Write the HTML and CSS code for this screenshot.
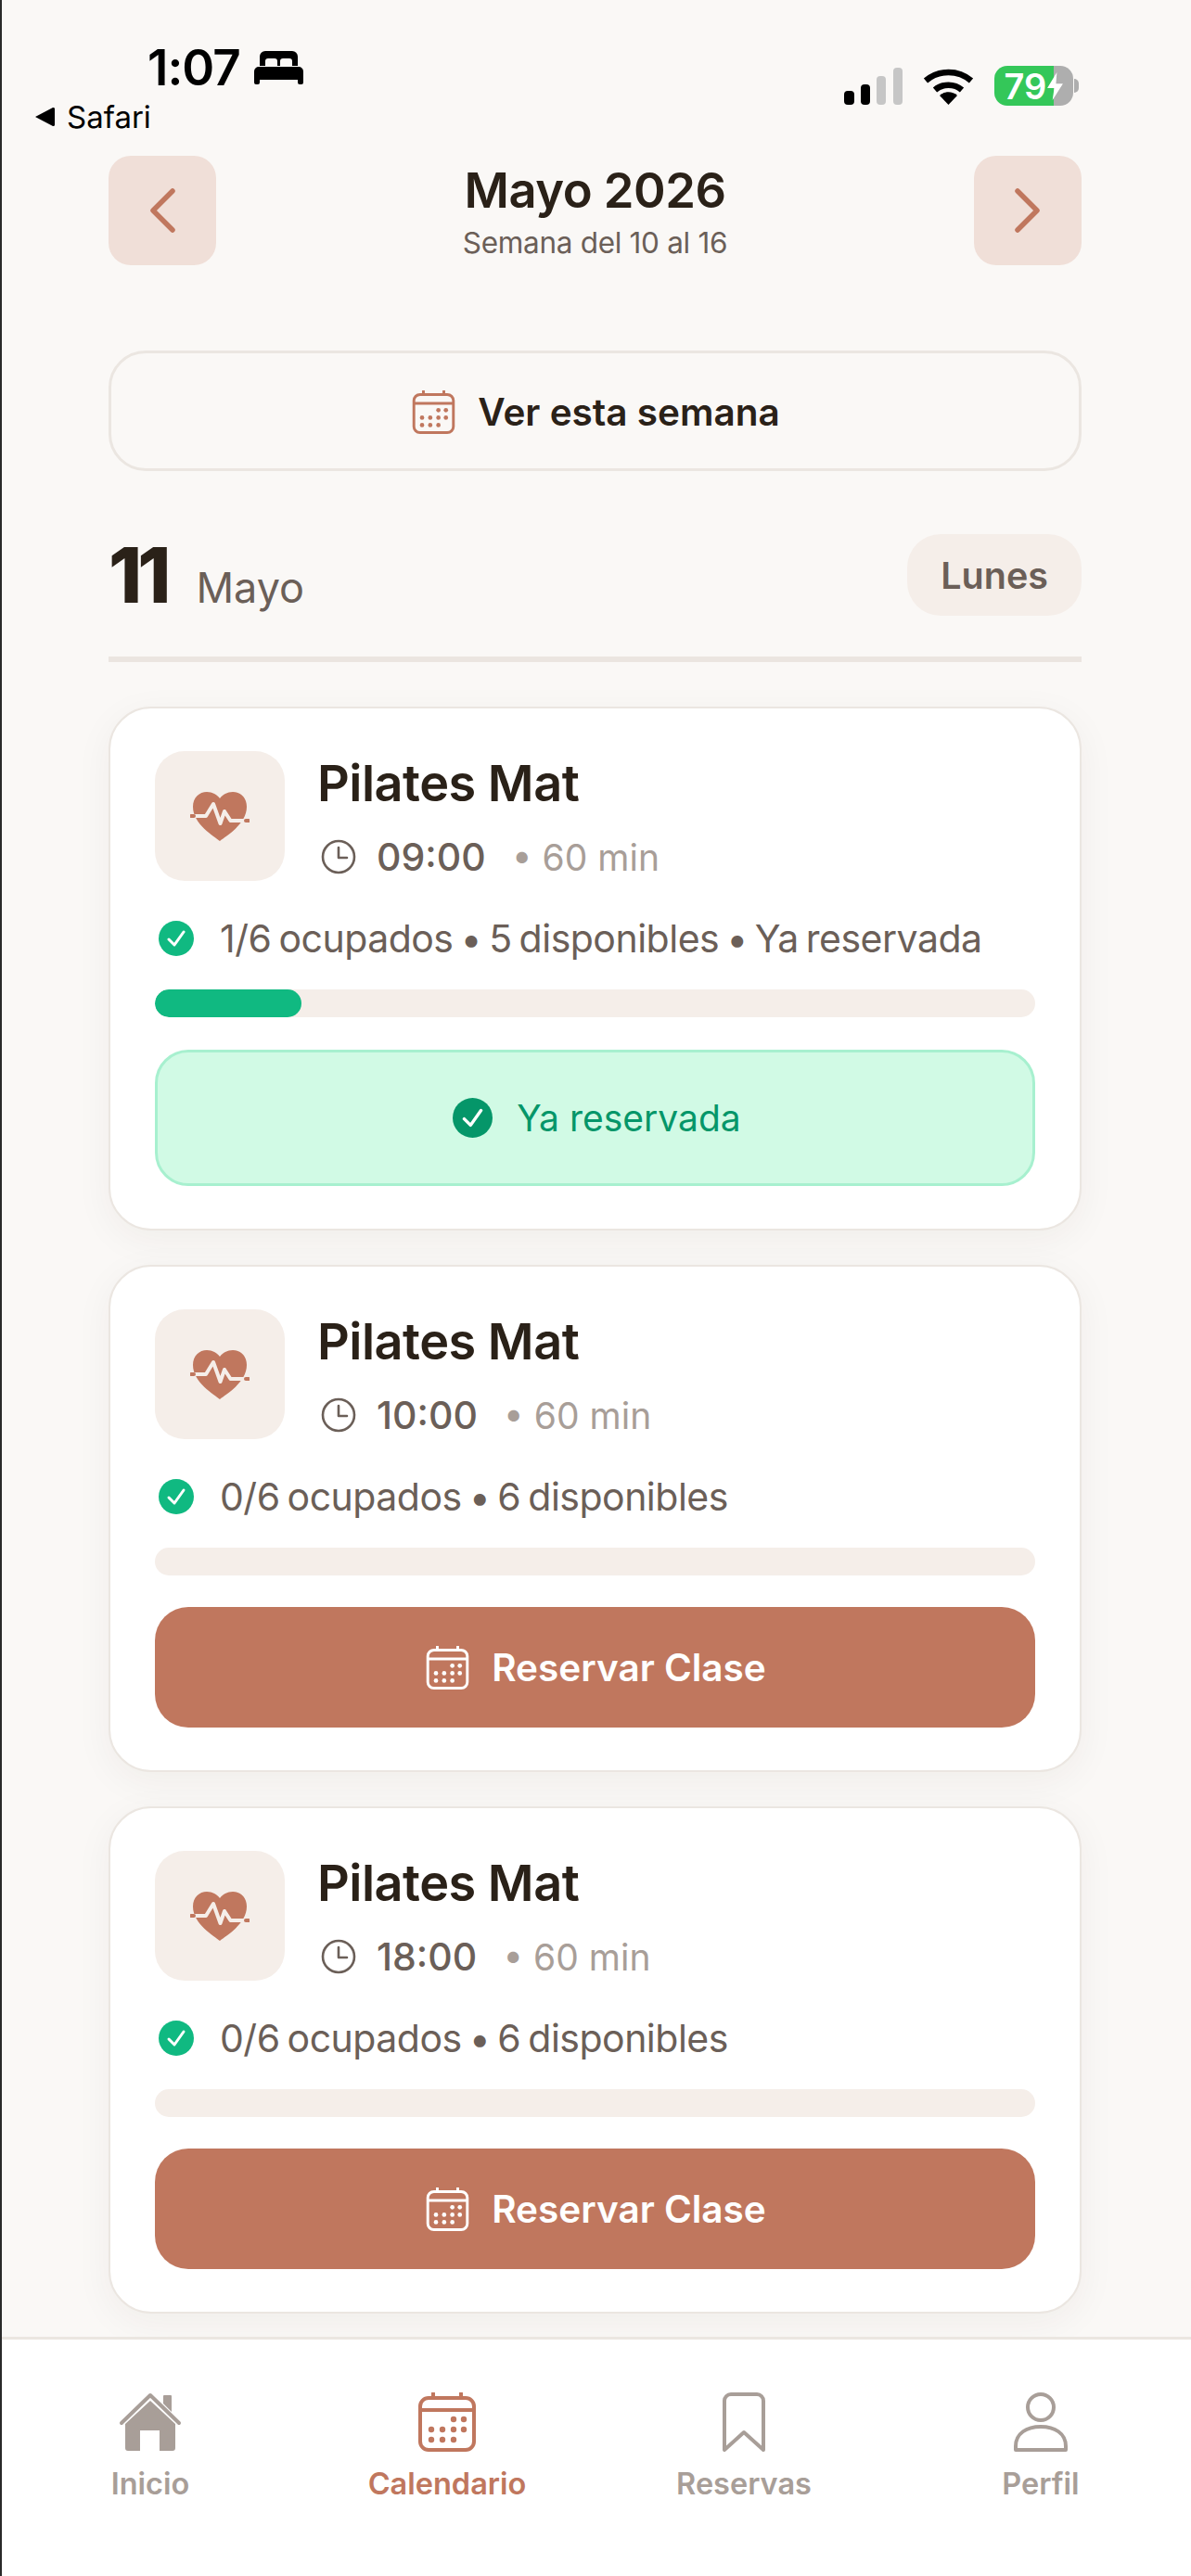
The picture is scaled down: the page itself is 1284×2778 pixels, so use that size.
FILE: index.html
```html
<!DOCTYPE html>
<html lang="es">

<head>
    <meta charset="utf-8">
    <title>Calendario</title>
    <link rel="stylesheet" href="styles.css">
</head>

<body>
    <svg class="defs" width="0" height="0">
        <symbol id="cal" viewBox="0 0 64 64">
            <rect x="3" y="6" width="58" height="56" rx="9" fill="none" stroke="currentColor" stroke-width="4" />
            <path d="M3 19H61" fill="none" stroke="currentColor" stroke-width="4" />
            <path d="M17 1V6M47 1V6" fill="none" stroke="currentColor" stroke-width="4" stroke-linecap="round" />
            <g fill="currentColor">
                <circle cx="39" cy="29" r="3.2" />
                <circle cx="50" cy="29" r="3.2" />
                <circle cx="15" cy="40" r="3.2" />
                <circle cx="27" cy="40" r="3.2" />
                <circle cx="39" cy="40" r="3.2" />
                <circle cx="50" cy="40" r="3.2" />
                <circle cx="15" cy="51" r="3.2" />
                <circle cx="27" cy="51" r="3.2" />
                <circle cx="39" cy="51" r="3.2" />
            </g>
        </symbol>
        <symbol id="heart" viewBox="0 0 64 64">
            <path d="M32 59C26 54 3 41 3 22C3 12 10 6 18 6C24 6 29 9 32 13C35 9 40 6 46 6C54 6 61 12 61 22C61 41 38 54 32 59Z" fill="#c0775e" />
            <path d="M4 32H17L25 19L32.500 40L37 27L43.500 37H60" fill="none" stroke="#f5eee9" stroke-width="4" stroke-linejoin="round" />
            <path d="M1 32H4M60 37H63" fill="none" stroke="#c0775e" stroke-width="4" stroke-linecap="round" />
        </symbol>
        <symbol id="clock" viewBox="0 0 38 38">
            <circle cx="19" cy="19" r="17" fill="none" stroke="currentColor" stroke-width="2.600" />
            <path d="M19 9V20H28" fill="none" stroke="currentColor" stroke-width="2.600" stroke-linecap="round" stroke-linejoin="round" />
        </symbol>
        <symbol id="check" viewBox="0 0 38 38">
            <circle cx="19" cy="19" r="19" fill="currentColor" />
            <path d="M11 20L17 26L27 12" fill="none" stroke="#fff" stroke-width="3" stroke-linecap="round" stroke-linejoin="round" />
        </symbol>
    </svg>

    <div class="page">
        <div class="status">
            <div class="status-left">
                <div class="clock-row">
                    <span class="time">1:07</span>
                    <svg class="bed" viewBox="0 0 53 36">
                        <path d="M6 16V6a6 6 0 0 1 6-6H41a6 6 0 0 1 6 6V16H41V11a3 3 0 0 0-3-3H31a3 3 0 0 0-3 3V16H25V11a3 3 0 0 0-3-3H15a3 3 0 0 0-3 3V16Z" />
                        <path d="M5 17H48a5 5 0 0 1 5 5V34a2 2 0 0 1-2 2H49a2 2 0 0 1-2-2V31H6V34a2 2 0 0 1-2 2H2a2 2 0 0 1-2-2V22a5 5 0 0 1 5-5Z" />
                    </svg>
                </div>
                <div class="back-row">
                    <svg class="back-arrow" viewBox="0 0 21 20">
                        <path d="M0 10L19 0a1.500 1.500 0 0 1 2 1.500V18.500a1.500 1.500 0 0 1-2 1.500Z" />
                    </svg>
                    <span>Safari</span>
                </div>
            </div>
            <div class="status-right">
                <svg class="signal" viewBox="0 0 63 40">
                    <rect x="0" y="25" width="11" height="15" rx="4" />
                    <rect x="18" y="18" width="10" height="22" rx="4" />
                    <rect class="off" x="35" y="9" width="10" height="31" rx="4" />
                    <rect class="off" x="53" y="0" width="10" height="40" rx="4" />
                </svg>
                <svg class="wifi" viewBox="0 0 55 40">
                    <path d="M3 14C17 2 38 2 52 14" fill="none" stroke="#000" stroke-width="6.500" />
                    <path d="M13 24C21 17 34 17 42 24" fill="none" stroke="#000" stroke-width="6.500" />
                    <path d="M18 30C23 25 32 25 37 30L27.500 40Z" />
                </svg>
                <div class="battery"><span>79</span><svg class="bolt" viewBox="0 0 18 32">
                        <path d="M11 0L0 18H8L6 32L18 13H10Z" />
                    </svg></div>
            </div>
        </div>

        <main class="content">
            <div class="month-row">
                <button class="nav-btn"><svg class="chev" viewBox="0 0 30 48">
                        <path d="M26 3L5 24L26 45" />
                    </svg></button>
                <div class="month-title">
                    <h1>Mayo 2026</h1>
                    <p>Semana del 10 al 16</p>
                </div>
                <button class="nav-btn"><svg class="chev" viewBox="0 0 30 48">
                        <path d="M4 3L25 24L4 45" />
                    </svg></button>
            </div>

            <button class="week-btn"><svg class="ico-cal accent">
                    <use href="#cal" />
                </svg>Ver esta semana</button>

            <div class="day-row">
                <div class="day-date"><span class="day-num">11</span><span class="day-month">Mayo</span></div>
                <span class="day-pill">Lunes</span>
            </div>

            <article class="card">
                <div class="card-top">
                    <div class="card-icon"><svg class="ico-heart">
                            <use href="#heart" />
                        </svg></div>
                    <div class="card-info">
                        <h2>Pilates Mat</h2>
                        <div class="card-time"><svg class="ico-clock">
                                <use href="#clock" />
                            </svg><strong>09:00</strong><span>• 60 min</span></div>
                    </div>
                </div>
                <div class="card-status"><svg class="ico-check">
                        <use href="#check" />
                    </svg>1/6 ocupados • 5 disponibles • Ya reservada</div>
                <div class="bar"><div class="bar-fill" style="width: 16.67%"></div></div>
                <div class="booked"><svg class="ico-check-lg">
                        <use href="#check" />
                    </svg>Ya reservada</div>
            </article>

            <article class="card">
                <div class="card-top">
                    <div class="card-icon"><svg class="ico-heart">
                            <use href="#heart" />
                        </svg></div>
                    <div class="card-info">
                        <h2>Pilates Mat</h2>
                        <div class="card-time"><svg class="ico-clock">
                                <use href="#clock" />
                            </svg><strong>10:00</strong><span>• 60 min</span></div>
                    </div>
                </div>
                <div class="card-status"><svg class="ico-check">
                        <use href="#check" />
                    </svg>0/6 ocupados • 6 disponibles</div>
                <div class="bar"></div>
                <button class="reserve"><svg class="ico-cal">
                        <use href="#cal" />
                    </svg>Reservar Clase</button>
            </article>

            <article class="card">
                <div class="card-top">
                    <div class="card-icon"><svg class="ico-heart">
                            <use href="#heart" />
                        </svg></div>
                    <div class="card-info">
                        <h2>Pilates Mat</h2>
                        <div class="card-time"><svg class="ico-clock">
                                <use href="#clock" />
                            </svg><strong>18:00</strong><span>• 60 min</span></div>
                    </div>
                </div>
                <div class="card-status"><svg class="ico-check">
                        <use href="#check" />
                    </svg>0/6 ocupados • 6 disponibles</div>
                <div class="bar"></div>
                <button class="reserve"><svg class="ico-cal">
                        <use href="#cal" />
                    </svg>Reservar Clase</button>
            </article>
        </main>

        <nav class="tabs">
            <div class="tab">
                <svg class="tab-icon" viewBox="0 0 68 64">
                    <path d="M3 33L34 3L65 33" fill="none" stroke="currentColor" stroke-width="4" stroke-linecap="round" stroke-linejoin="round" />
                    <path d="M7 34L34 9L61 34V60a3 3 0 0 1-3 3H44V41H23V63H10a3 3 0 0 1-3-3Z" fill="currentColor" />
                    <path d="M48 4a1 1 0 0 1 1-1H56a1 1 0 0 1 1 1V21L48 12Z" fill="currentColor" />
                </svg>
                <span>Inicio</span>
            </div>
            <div class="tab active">
                <svg class="tab-icon">
                    <use href="#cal" />
                </svg>
                <span>Calendario</span>
            </div>
            <div class="tab">
                <svg class="tab-icon" viewBox="0 0 46 64">
                    <path d="M2 62V9a7 7 0 0 1 7-7H37a7 7 0 0 1 7 7V62L23 43Z" fill="none" stroke="currentColor" stroke-width="4" stroke-linejoin="round" />
                </svg>
                <span>Reservas</span>
            </div>
            <div class="tab">
                <svg class="tab-icon" viewBox="0 0 58 64">
                    <circle cx="29" cy="16" r="14" fill="none" stroke="currentColor" stroke-width="4" />
                    <path d="M2 62V58C2 44 14 37 29 37C44 37 56 44 56 58V62Z" fill="none" stroke="currentColor" stroke-width="4" stroke-linejoin="round" />
                </svg>
                <span>Perfil</span>
            </div>
        </nav>
    </div>
</body>

</html>
```

FILE: styles.css
```css
* {
    box-sizing: border-box;
}

body {
    margin: 0;
    background: #faf8f6;
    font-family: Inter, "Liberation Sans", sans-serif;
    color: #2a2118;
}

.defs {
    position: absolute;
}

.page {
    height: 2778px;
    display: flex;
    flex-direction: column;
    overflow: hidden;
    border-left: 2px solid #2a2a2a;
}

/* Status bar */
.status {
    height: 168px;
    display: flex;
    justify-content: space-between;
    padding: 46px 127px 0 36px;
    color: #000;
}

.clock-row {
    display: flex;
    align-items: center;
    gap: 15px;
    padding-left: 121px;
    height: 54px;
}

.time {
    font-size: 53px;
    font-weight: 600;
    letter-spacing: -1px;
    line-height: 54px;
}

.bed {
    width: 53px;
    height: 36px;
}

.back-row {
    display: flex;
    align-items: center;
    gap: 13px;
    margin-top: 8px;
    font-size: 33px;
    font-weight: 400;
    height: 36px;
}

.back-arrow {
    width: 21px;
    height: 20px;
}

.status-right {
    display: flex;
    align-items: center;
    gap: 22px;
    height: 43px;
    margin-top: 25px;
}

.signal {
    width: 63px;
    height: 40px;
}

.signal .off {
    fill: #c6c6c6;
}

.wifi {
    width: 55px;
    height: 40px;
}

.battery {
    position: relative;
    width: 85px;
    height: 43px;
    border-radius: 14px;
    background: linear-gradient(90deg, #34c759 75%, #aeaeae 75%);
    display: flex;
    align-items: center;
    justify-content: center;
    gap: 1px;
    color: #fff;
    font-size: 38px;
    font-weight: 600;
}

.battery::after {
    content: "";
    position: absolute;
    right: -6px;
    top: 14px;
    width: 5px;
    height: 15px;
    border-radius: 0 6px 6px 0;
    background: #aeaeae;
}

.bolt {
    width: 17px;
    height: 30px;
    fill: #fff;
}

/* Page content */
.content {
    flex: 1;
    padding: 0 118px 0 115px;
}

.month-row {
    display: flex;
    justify-content: space-between;
    align-items: center;
    height: 118px;
}

.nav-btn {
    width: 116px;
    height: 118px;
    border: none;
    border-radius: 24px;
    background: #f0dfd8;
    padding: 0;
    display: flex;
    align-items: center;
    justify-content: center;
}

.chev {
    width: 30px;
    height: 48px;
    fill: none;
    stroke: #c0775e;
    stroke-width: 5.500;
    stroke-linecap: round;
    stroke-linejoin: round;
}

.month-title {
    text-align: center;
}

.month-title h1 {
    margin: 0;
    font-size: 52.500px;
    font-weight: 600;
    line-height: 64px;
    letter-spacing: -0.5px;
}

.month-title p {
    margin: 6px 0 0;
    font-size: 31.500px;
    line-height: 38px;
    color: #6b5f58;
    letter-spacing: -0.3px;
}

.week-btn {
    width: 100%;
    height: 130px;
    margin-top: 92px;
    padding: 2px 0 0 2px;
    border: 3px solid #ebe6e1;
    border-radius: 40px;
    background: #faf8f6;
    display: flex;
    align-items: center;
    justify-content: center;
    gap: 24px;
    font-family: inherit;
    font-size: 40.500px;
    font-weight: 600;
    color: #2a2118;
}

.ico-cal {
    width: 47px;
    height: 47px;
}

.accent {
    color: #c0775e;
}

.day-row {
    display: flex;
    justify-content: space-between;
    align-items: flex-start;
    margin-top: 68px;
    height: 138px;
    padding-bottom: 44px;
    border-bottom: 6px solid #ebe5e0;
}

.day-date {
    display: flex;
    align-items: baseline;
    gap: 32px;
    margin-top: 1px;
}

.day-num {
    font-size: 82px;
    font-weight: 800;
    line-height: 88px;
    letter-spacing: -5px;
}

.day-month {
    font-size: 45px;
    color: #6b5f58;
}

.day-pill {
    height: 88px;
    padding: 2px 36px 0;
    border-radius: 36px;
    background: #f5eee9;
    display: flex;
    align-items: center;
    font-size: 39.500px;
    font-weight: 600;
    color: #6b5f58;
}

/* Class cards */
.card {
    margin-top: 37px;
    padding: 46px 48px;
    background: #fff;
    border: 2px solid #ebe6e1;
    border-radius: 46px;
    box-shadow: 0 10px 40px rgba(60, 40, 20, 0.05);
}

.day-row + .card {
    margin-top: 48px;
}

.card-top {
    display: flex;
    gap: 35px;
}

.card-icon {
    width: 140px;
    height: 140px;
    border-radius: 32px;
    background: #f5eee9;
    display: flex;
    align-items: center;
    justify-content: center;
}

.ico-heart {
    width: 64px;
    height: 64px;
}

.card-info h2 {
    margin: 3px 0 0;
    font-size: 54px;
    font-weight: 600;
    line-height: 64px;
    letter-spacing: -0.5px;
}

.card-time {
    display: flex;
    align-items: center;
    margin-top: 22px;
    color: #6b5f58;
    font-size: 41px;
}

.ico-clock {
    width: 38px;
    height: 38px;
    margin: 0 22px 0 4px;
}

.card-time strong {
    font-weight: 500;
}

.card-time span {
    margin-left: 28px;
    color: #a89e98;
    font-size: 39px;
}

.card-status {
    display: flex;
    align-items: center;
    gap: 28px;
    height: 38px;
    margin-top: 43px;
    padding-left: 4px;
    font-size: 41px;
    letter-spacing: -0.5px;
    word-spacing: -3px;
    color: #6b5f58;
}

.ico-check {
    width: 38px;
    height: 38px;
    color: #10b981;
}

.bar {
    height: 30px;
    margin-top: 36px;
    border-radius: 15px;
    background: #f5eee9;
    overflow: hidden;
}

.bar-fill {
    height: 100%;
    border-radius: 15px;
    background: #10b981;
}

.booked {
    height: 147px;
    margin-top: 35px;
    padding-left: 4px;
    border: 3px solid #a7f0cf;
    border-radius: 36px;
    background: #d1fae5;
    display: flex;
    align-items: center;
    justify-content: center;
    gap: 26px;
    font-size: 39px;
    color: #059669;
}

.ico-check-lg {
    width: 43px;
    height: 43px;
    color: #059669;
}

.reserve {
    width: 100%;
    height: 130px;
    margin-top: 34px;
    padding: 0 0 0 2px;
    border: none;
    border-radius: 36px;
    background: #c0775e;
    display: flex;
    align-items: center;
    justify-content: center;
    gap: 24px;
    font-family: inherit;
    font-size: 40.500px;
    font-weight: 600;
    color: #fff;
}

/* Bottom tabs */
.tabs {
    height: 258px;
    flex-shrink: 0;
    background: #fff;
    border-top: 3px solid #ebe6e1;
    display: grid;
    grid-template-columns: repeat(4, 320px);
    padding-top: 57px;
}

.tab {
    display: flex;
    flex-direction: column;
    align-items: center;
    gap: 15px;
    color: #a89e98;
    font-size: 32.500px;
    font-weight: 600;
}

.tab.active {
    color: #c0775e;
}

.tab-icon {
    height: 64px;
    width: 68px;
}
```
